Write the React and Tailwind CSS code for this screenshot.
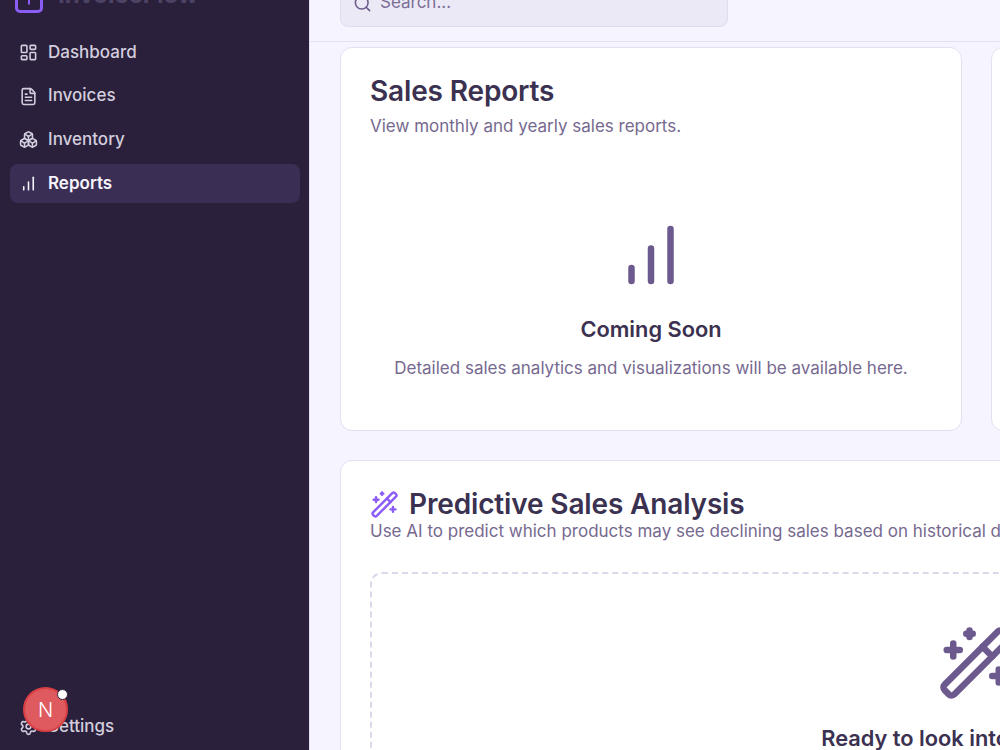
import React from 'react';
import {
  LayoutDashboard,
  FileText,
  Boxes,
  Settings,
  Search,
  WandSparkles,
  Plus,
} from 'lucide-react';

function BarsIcon({ className }) {
  return (
    <svg
      viewBox="0 0 24 24"
      fill="none"
      stroke="currentColor"
      strokeWidth="2"
      strokeLinecap="round"
      className={className}
    >
      <path d="M6 20v-4" />
      <path d="M12 20V10" />
      <path d="M18 20V4" />
    </svg>
  );
}

const navItems = [
  { label: 'Dashboard', icon: LayoutDashboard },
  { label: 'Invoices', icon: FileText },
  { label: 'Inventory', icon: Boxes },
  { label: 'Reports', icon: BarsIcon, active: true },
];

function Sidebar() {
  return (
    <aside className="relative flex h-[750px] w-[310px] shrink-0 flex-col border-r border-[#e4e0f0] bg-[#2a203c] pl-[10px] pr-[9px]">
      <div className="-mt-[26px] flex h-[50px] items-center gap-[15px] pl-[5px]">
        <div className="flex h-[28px] w-[28px] items-center justify-center rounded-[5px] border-[3px] border-[#8b5cf6]">
          <Plus className="h-4 w-4 text-[#8b5cf6]" strokeWidth={3} />
        </div>
        <span className="mb-[8px] text-[24px] font-bold leading-none text-[#4d4364]">InvoiceFlow</span>
      </div>
      <nav className="mt-[8.6px] flex flex-col gap-[5px]">
        {navItems.map(({ label, icon: Icon, active }) => (
          <a
            key={label}
            className={`flex h-[38.75px] items-center gap-[10px] rounded-lg px-[9px] pt-[1px] text-[17px] font-medium ${
              active ? 'bg-[#3b2e54] font-semibold text-[#f7f5fc]' : 'text-[#d3cedd]'
            }`}
          >
            <Icon className="h-[19px] w-[19px]" strokeWidth={2} />
            {label}
          </a>
        ))}
      </nav>
      <div className="mt-auto mb-[4px] flex h-[39px] items-center gap-[10px] px-[9px] text-[17px] font-medium text-[#d3cedd]">
        <Settings className="h-[19px] w-[19px]" strokeWidth={2} />
        Settings
      </div>
      <div className="absolute bottom-[18px] left-[23px] flex h-[45px] w-[45px] items-center justify-center rounded-full border-2 border-[#d93f43] bg-[#df5a5f] text-[20px] font-light text-white">
        N
        <span className="absolute top-[0px] -right-[2px] h-[11px] w-[11px] rounded-full border border-[#2a203c] bg-white" />
      </div>
    </aside>
  );
}

function Header() {
  return (
    <header className="flex h-[42px] shrink-0 items-end border-b border-[#e4e0f0] bg-[#f6f4fe] pb-[14px] pl-[30px]">
      <div className="flex h-[50px] w-[388px] items-center gap-[8px] rounded-lg border border-[#e0dcee] bg-[#ece9f7] pl-[12px] pt-[2px]">
        <Search className="h-[19px] w-[19px] text-[#6b5b8a]" />
        <span className="text-[17px] text-[#7b6f96]">Search...</span>
      </div>
    </header>
  );
}

function SalesCard() {
  return (
    <section className="h-[384px] w-[622px] shrink-0 rounded-xl border border-[#e4e0f0] bg-white px-[29px] pt-[28px]">
      <h2 className="text-[28px] font-semibold leading-[30px] tracking-[-0.15px] text-[#3b3150]">Sales Reports</h2>
      <p className="mt-[8px] text-[17px] leading-[25px] text-[#76698f]">View monthly and yearly sales reports.</p>
      <div className="mt-[86px] flex flex-col items-center">
        <BarsIcon className="-my-[9px] h-[78px] w-[78px] text-[#6c5a8e]" />
        <h3 className="mt-[29px] text-[21.8px] font-semibold leading-[30px] text-[#3b3150]">Coming Soon</h3>
        <p className="mt-[12px] text-[17px] leading-[25px] text-[#76698f]">
          Detailed sales analytics and visualizations will be available here.
        </p>
      </div>
    </section>
  );
}

function PredictiveCard() {
  return (
    <section className="mt-[29px] w-[1271px] shrink-0 rounded-xl border border-[#e4e0f0] bg-white px-[29px] pt-[28px]">
      <div className="flex items-center gap-[10px]">
        <WandSparkles className="h-[29px] w-[29px] text-[#8b5cf6]" />
        <h2 className="whitespace-nowrap text-[28px] font-semibold leading-[30px] tracking-[-0.15px] text-[#3b3150]">Predictive Sales Analysis</h2>
      </div>
      <p className="whitespace-nowrap text-[17px] leading-[25px] text-[#76698f]">
        Use AI to predict which products may see declining sales based on historical data.
      </p>
      <div className="mt-[28px] flex h-[300px] flex-col items-center rounded-xl border-2 border-dashed border-[#dcd8ea] pt-[50px]">
        <WandSparkles className="h-[78px] w-[78px] text-[#6c5a8e]" />
        <h3 className="mt-[21px] whitespace-nowrap text-[21.8px] font-semibold leading-[30px] text-[#3b3150]">Ready to look into the future?</h3>
      </div>
    </section>
  );
}

export default function App() {
  return (
    <div className="flex h-[750px] w-[1000px] overflow-hidden bg-[#f6f4fe] font-['Inter',sans-serif]">
      <Sidebar />
      <main className="flex min-w-0 flex-1 flex-col overflow-hidden">
        <Header />
        <div className="pl-[30px] pt-[5px]">
          <div className="flex gap-[29px]">
            <SalesCard />
            <section className="h-[384px] w-[622px] shrink-0 rounded-xl border border-[#e4e0f0] bg-white" />
          </div>
          <PredictiveCard />
        </div>
      </main>
    </div>
  );
}
